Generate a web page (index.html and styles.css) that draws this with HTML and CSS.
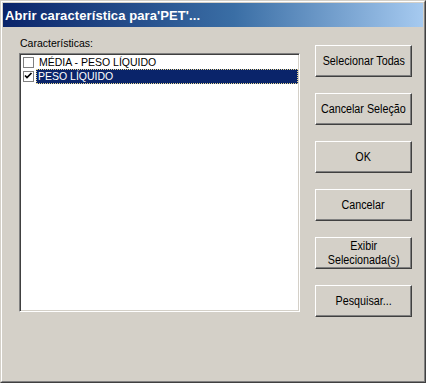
FILE: index.html
```html
<!DOCTYPE html>
<html lang="pt">
<head>
<meta charset="utf-8">
<title>Abrir característica</title>
<link rel="stylesheet" href="styles.css">
</head>
<body>
<div class="window">
  <div class="frame">
    <div class="titlebar"><span class="title">Abrir característica para'PET'...</span></div>
    <div class="content">
      <div class="left">
        <div class="label">Características:</div>
        <div class="list">
          <div class="row">
            <span class="check"></span>
            <span class="item">MÉDIA - PESO LÍQUIDO</span>
          </div>
          <div class="row">
            <span class="check"><svg width="11" height="11" viewBox="0 0 11 11"><path d="M2 4.5 L4 6.5 L8.5 2" fill="none" stroke="#000" stroke-width="1.7"/></svg></span>
            <span class="item selected">PESO LÍQUIDO</span>
          </div>
        </div>
      </div>
      <div class="buttons">
        <div class="btn"><span class="cap">Selecionar Todas</span></div>
        <div class="btn"><span class="cap">Cancelar Seleção</span></div>
        <div class="btn"><span class="cap">OK</span></div>
        <div class="btn"><span class="cap">Cancelar</span></div>
        <div class="btn"><span class="cap">Exibir<br>Selecionada(s)</span></div>
        <div class="btn"><span class="cap">Pesquisar...</span></div>
      </div>
    </div>
  </div>
</div>
</body>
</html>
```
FILE: styles.css
```css
html, body {
  margin: 0;
  padding: 0;
  background: #d4d0c8;
}
.window {
  width: 426px;
  height: 383px;
  box-sizing: border-box;
  border: 1px solid;
  border-color: #d4d0c8 #404040 #404040 #d4d0c8;
  background: #d4d0c8;
}
.frame {
  height: 100%;
  box-sizing: border-box;
  border: 1px solid;
  border-color: #ffffff #808080 #808080 #ffffff;
  padding: 1px;
  display: flex;
  flex-direction: column;
}
.titlebar {
  height: 24px;
  background: linear-gradient(to right, #0a246a 0%, #3a6ea5 55%, #a6caf0 100%);
  display: flex;
  align-items: center;
  padding-left: 2px;
  padding-top: 1px;
  box-sizing: border-box;
}
.title {
  color: #ffffff;
  font-family: "Liberation Sans", Arial, sans-serif;
  font-weight: bold;
  font-size: 13px;
  letter-spacing: 0.1px;
}
.content {
  display: flex;
  flex-direction: row;
  padding-left: 16px;
}
.left {
  display: flex;
  flex-direction: column;
  padding-top: 10px;
}
.label {
  font-family: "Liberation Sans", Arial, sans-serif;
  font-size: 10.5px;
  line-height: 12px;
  padding-left: 1px;
  margin-bottom: 4px;
  color: #000;
}
.list {
  width: 281px;
  height: 259px;
  box-sizing: border-box;
  background: #ffffff;
  border: 1px solid;
  border-color: #808080 #ffffff #ffffff #808080;
  box-shadow: inset 1px 1px #404040, inset -1px -1px #d4d0c8;
  padding: 1px;
}
.row {
  height: 14px;
  display: flex;
  align-items: center;
}
.row + .row {
  height: 15px;
}
.check {
  width: 11px;
  height: 11px;
  box-sizing: border-box;
  border: 1px solid #808080;
  background: #fff;
  margin-left: 2px;
  margin-right: 2px;
  position: relative;
}
.check svg {
  position: absolute;
  left: -1px;
  top: -1px;
}
.item {
  font-family: "Liberation Sans", Arial, sans-serif;
  font-size: 10.5px;
  line-height: 13px;
  padding-left: 2px;
  color: #000;
  flex: 1;
  border: 1px solid transparent;
}
.item.selected {
  background: #0a246a;
  color: #ffffff;
  border: 1px dotted #e8d890;
  padding-left: 1px;
}
.buttons {
  display: flex;
  flex-direction: column;
  gap: 16px;
  padding-top: 18px;
  margin-left: 15px;
}
.btn {
  width: 97px;
  height: 32px;
  box-sizing: border-box;
  border: 1px solid;
  border-color: #ffffff #404040 #404040 #ffffff;
  box-shadow: inset -1px -1px #808080;
  display: flex;
  align-items: center;
  justify-content: center;
  text-align: center;
  font-family: "Liberation Sans", Arial, sans-serif;
  font-size: 12.5px;
  line-height: 14px;
  color: #000;
}
.cap {
  display: inline-block;
  white-space: nowrap;
  transform: scaleX(0.86);
}
```
